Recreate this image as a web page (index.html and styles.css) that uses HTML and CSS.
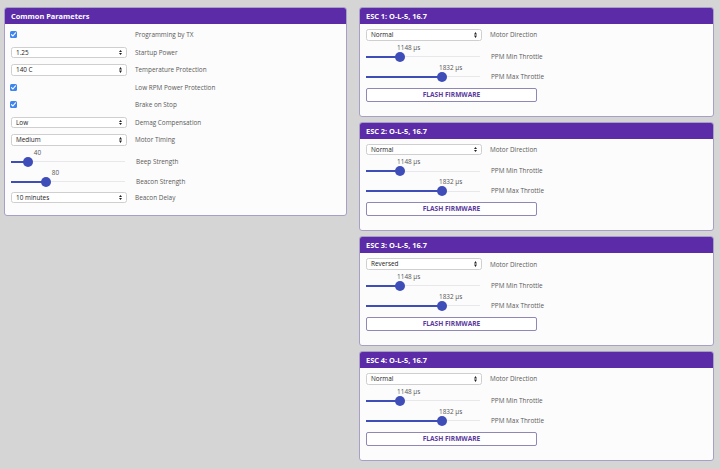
FILE: index.html
```html
<!DOCTYPE html>
<html>
<head>
<meta charset="utf-8">
<link rel="stylesheet" href="styles.css">
</head>
<body>
<div class="page">
  <section class="panel common">
    <header class="panel-head">Common Parameters</header>
    <div class="panel-body">
      <div class="row"><div class="ctl"><span class="check"></span></div><div class="lbl">Programming by TX</div></div>
      <div class="row"><div class="ctl"><div class="select">1.25<span class="arrows"></span></div></div><div class="lbl">Startup Power</div></div>
      <div class="row"><div class="ctl"><div class="select">140 C<span class="arrows"></span></div></div><div class="lbl">Temperature Protection</div></div>
      <div class="row"><div class="ctl"><span class="check"></span></div><div class="lbl">Low RPM Power Protection</div></div>
      <div class="row"><div class="ctl"><span class="check"></span></div><div class="lbl">Brake on Stop</div></div>
      <div class="row"><div class="ctl"><div class="select">Low<span class="arrows"></span></div></div><div class="lbl">Demag Compensation</div></div>
      <div class="row"><div class="ctl"><div class="select">Medium<span class="arrows"></span></div></div><div class="lbl">Motor Timing</div></div>
      <div class="row srow"><div class="ctl"><div class="slider"><span class="val" style="left:15.3%">40</span><div class="track"><div class="fill" style="width:15.3%"></div><span class="thumb" style="left:15.3%"></span></div></div></div><div class="lbl">Beep Strength</div></div>
      <div class="row srow"><div class="ctl"><div class="slider"><span class="val" style="left:31.1%">80</span><div class="track"><div class="fill" style="width:31.1%"></div><span class="thumb" style="left:31.1%"></span></div></div></div><div class="lbl">Beacon Strength</div></div>
      <div class="row"><div class="ctl"><div class="select">10 minutes<span class="arrows"></span></div></div><div class="lbl">Beacon Delay</div></div>
    </div>
  </section>
  <div class="esc-col">
    <section class="panel esc">
      <header class="panel-head">ESC 1: O-L-5, 16.7</header>
      <div class="panel-body">
        <div class="row"><div class="ctl"><div class="select">Normal<span class="arrows"></span></div></div><div class="lbl">Motor Direction</div></div>
        <div class="row srow"><div class="ctl"><div class="slider"><span class="val wide" style="left:29.6%">1148 µs</span><div class="track"><div class="fill" style="width:29.6%"></div><span class="thumb" style="left:29.6%"></span></div></div></div><div class="lbl">PPM Min Throttle</div></div>
        <div class="row srow"><div class="ctl"><div class="slider"><span class="val wide" style="left:66.4%">1832 µs</span><div class="track"><div class="fill" style="width:66.4%"></div><span class="thumb" style="left:66.4%"></span></div></div></div><div class="lbl">PPM Max Throttle</div></div>
        <button class="flash">FLASH FIRMWARE</button>
      </div>
    </section>
    <section class="panel esc">
      <header class="panel-head">ESC 2: O-L-5, 16.7</header>
      <div class="panel-body">
        <div class="row"><div class="ctl"><div class="select">Normal<span class="arrows"></span></div></div><div class="lbl">Motor Direction</div></div>
        <div class="row srow"><div class="ctl"><div class="slider"><span class="val wide" style="left:29.6%">1148 µs</span><div class="track"><div class="fill" style="width:29.6%"></div><span class="thumb" style="left:29.6%"></span></div></div></div><div class="lbl">PPM Min Throttle</div></div>
        <div class="row srow"><div class="ctl"><div class="slider"><span class="val wide" style="left:66.4%">1832 µs</span><div class="track"><div class="fill" style="width:66.4%"></div><span class="thumb" style="left:66.4%"></span></div></div></div><div class="lbl">PPM Max Throttle</div></div>
        <button class="flash">FLASH FIRMWARE</button>
      </div>
    </section>
    <section class="panel esc">
      <header class="panel-head">ESC 3: O-L-5, 16.7</header>
      <div class="panel-body">
        <div class="row"><div class="ctl"><div class="select">Reversed<span class="arrows"></span></div></div><div class="lbl">Motor Direction</div></div>
        <div class="row srow"><div class="ctl"><div class="slider"><span class="val wide" style="left:29.6%">1148 µs</span><div class="track"><div class="fill" style="width:29.6%"></div><span class="thumb" style="left:29.6%"></span></div></div></div><div class="lbl">PPM Min Throttle</div></div>
        <div class="row srow"><div class="ctl"><div class="slider"><span class="val wide" style="left:66.4%">1832 µs</span><div class="track"><div class="fill" style="width:66.4%"></div><span class="thumb" style="left:66.4%"></span></div></div></div><div class="lbl">PPM Max Throttle</div></div>
        <button class="flash">FLASH FIRMWARE</button>
      </div>
    </section>
    <section class="panel esc">
      <header class="panel-head">ESC 4: O-L-5, 16.7</header>
      <div class="panel-body">
        <div class="row"><div class="ctl"><div class="select">Normal<span class="arrows"></span></div></div><div class="lbl">Motor Direction</div></div>
        <div class="row srow"><div class="ctl"><div class="slider"><span class="val wide" style="left:29.6%">1148 µs</span><div class="track"><div class="fill" style="width:29.6%"></div><span class="thumb" style="left:29.6%"></span></div></div></div><div class="lbl">PPM Min Throttle</div></div>
        <div class="row srow"><div class="ctl"><div class="slider"><span class="val wide" style="left:66.4%">1832 µs</span><div class="track"><div class="fill" style="width:66.4%"></div><span class="thumb" style="left:66.4%"></span></div></div></div><div class="lbl">PPM Max Throttle</div></div>
        <button class="flash">FLASH FIRMWARE</button>
      </div>
    </section>
  </div>
</div>
</body>
</html>
```
FILE: styles.css
```css
html, body {
  margin: 0;
  padding: 0;
  background: #d5d5d5;
  width: 720px;
  height: 469px;
  overflow: hidden;
  font-family: "Open Sans", "Liberation Sans", sans-serif;
}
.page {
  display: flex;
  align-items: flex-start;
  gap: 12px;
  padding: 7px 0 0 4px;
}
.common {
  width: 343px;
  height: 208.5px;
}
.esc-col {
  display: flex;
  flex-direction: column;
  gap: 5px;
  width: 355px;
}
.esc {
  height: 109.7px;
}
.panel {
  box-sizing: border-box;
  background: #fcfcfc;
  border: 1px solid #a79fc6;
  border-radius: 3px;
  overflow: hidden;
}
.panel-head {
  height: 16px;
  background: #5c2ba8;
  color: #fff;
  font-weight: 700;
  font-size: 7.4px;
  line-height: 16px;
  padding-left: 6px;
}
.panel-body {
  padding: 2px 0 0 6px;
}
.row {
  display: flex;
  align-items: center;
  height: 17.5px;
  gap: 8px;
}
.srow {
  height: 20px;
  align-items: flex-end;
}
.srow .lbl {
  padding-bottom: 3px;
  padding-left: 1px;
}
.ctl {
  width: 116px;
  flex: none;
  display: flex;
  align-items: center;
}
.lbl {
  font-size: 6.4px;
  color: #5a5a5a;
}
.check {
  width: 7px;
  height: 7px;
  margin-left: -1px;
  border-radius: 1.5px;
  background: #3d86f0 url("data:image/svg+xml;utf8,<svg xmlns='http://www.w3.org/2000/svg' viewBox='0 0 7 7'><path d='M1.5 3.6 L2.9 5 L5.5 1.9' fill='none' stroke='white' stroke-width='1.1' stroke-linecap='round' stroke-linejoin='round'/></svg>") center/7px 7px no-repeat;
}
.select {
  position: relative;
  box-sizing: border-box;
  width: 116px;
  height: 11.5px;
  border: 1px solid #cfcfcf;
  border-radius: 2.5px;
  background: #fff;
  font-size: 6.4px;
  line-height: 9.5px;
  color: #222;
  padding-left: 4px;
}
.arrows {
  position: absolute;
  right: 4px;
  top: 2px;
  width: 3.4px;
  height: 5.5px;
  background: url("data:image/svg+xml;utf8,<svg xmlns='http://www.w3.org/2000/svg' viewBox='0 0 3.4 5.5'><path d='M0 2.2 L1.7 0 L3.4 2.2 Z M0 3.3 L1.7 5.5 L3.4 3.3 Z' fill='%23222'/></svg>") center/3.4px 5.5px no-repeat;
}
.slider {
  position: relative;
  width: 114px;
  height: 20px;
}
.val {
  position: absolute;
  top: 0px;
  margin-left: 9px;
  transform: translateX(-50%);
  font-size: 6.4px;
  line-height: 7px;
  color: #555;
  white-space: nowrap;
}
.val.wide {
  margin-left: 9px;
}
.track {
  position: absolute;
  left: 0;
  right: 0;
  top: 12.5px;
  height: 1px;
  background: #e8e8ec;
}
.fill {
  position: absolute;
  left: 0;
  top: -0.5px;
  height: 2px;
  background: #3f4db8;
}
.thumb {
  position: absolute;
  top: -4.5px;
  width: 10px;
  height: 10px;
  margin-left: -5px;
  border-radius: 50%;
  background: #3f4db8;
}
.flash {
  display: block;
  box-sizing: border-box;
  margin-top: 4px;
  width: 171px;
  height: 14px;
  padding: 0;
  border: 1px solid #8f87b5;
  border-radius: 2px;
  background: #fff;
  color: #5b3a9d;
  font-family: "Open Sans", "Liberation Sans", sans-serif;
  font-weight: 700;
  font-size: 6.6px;
  line-height: 12px;
}
```
